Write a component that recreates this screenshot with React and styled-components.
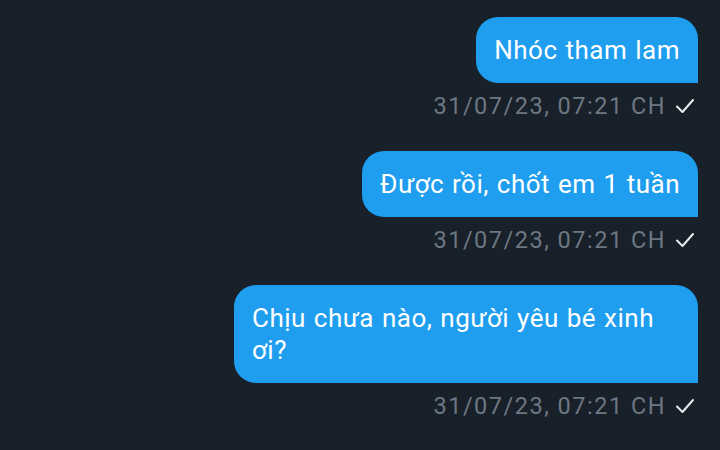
import React from "react";
import styled, { createGlobalStyle } from "styled-components";

const Global = createGlobalStyle`
  html, body { margin: 0; padding: 0; background: #18202a; }
  body { font-family: Roboto, "Noto Sans", sans-serif; }
`;

const Screen = styled.div`
  width: 720px;
  height: 450px;
  overflow: hidden;
  background: #18202a;
  display: flex;
  flex-direction: column;
  align-items: flex-end;
  gap: 30px;
  padding: 17px 22px 0 0;
  box-sizing: border-box;
`;

const Group = styled.div`
  display: flex;
  flex-direction: column;
  align-items: flex-end;
`;

const Bubble = styled.div`
  box-sizing: border-box;
  max-width: 464px;
  background: #1f9eef;
  color: #ffffff;
  font-size: 26px;
  letter-spacing: 0.5px;
  word-spacing: 1px;
  line-height: 32px;
  padding: 17px 18px;
  border-radius: 22px 22px 0 22px;
`;

const Meta = styled.div`
  display: flex;
  align-items: center;
  gap: 9px;
  margin-top: 8px;
  height: 30px;
  padding-right: 3px;
  font-size: 23.5px;
  letter-spacing: 1.5px;
  color: #6d7782;
`;

const Check = () => (
  <svg width="20" height="16" viewBox="0 0 20 16" fill="none">
    <path d="M2 8.5 L7.5 14 L18 2" stroke="#e8eaec" strokeWidth="2" strokeLinecap="round" strokeLinejoin="round" />
  </svg>
);

const messages = [
  "Nhóc tham lam",
  "Được rồi, chốt em 1 tuần",
  "Chịu chưa nào, người yêu bé xinh ơi?",
];

export default function App() {
  return (
    <>
      <Global />
      <Screen>
        {messages.map((m, i) => (
          <Group key={i}>
            <Bubble>{m}</Bubble>
            <Meta>
              <span>31/07/23, 07:21 CH</span>
              <Check />
            </Meta>
          </Group>
        ))}
      </Screen>
    </>
  );
}
